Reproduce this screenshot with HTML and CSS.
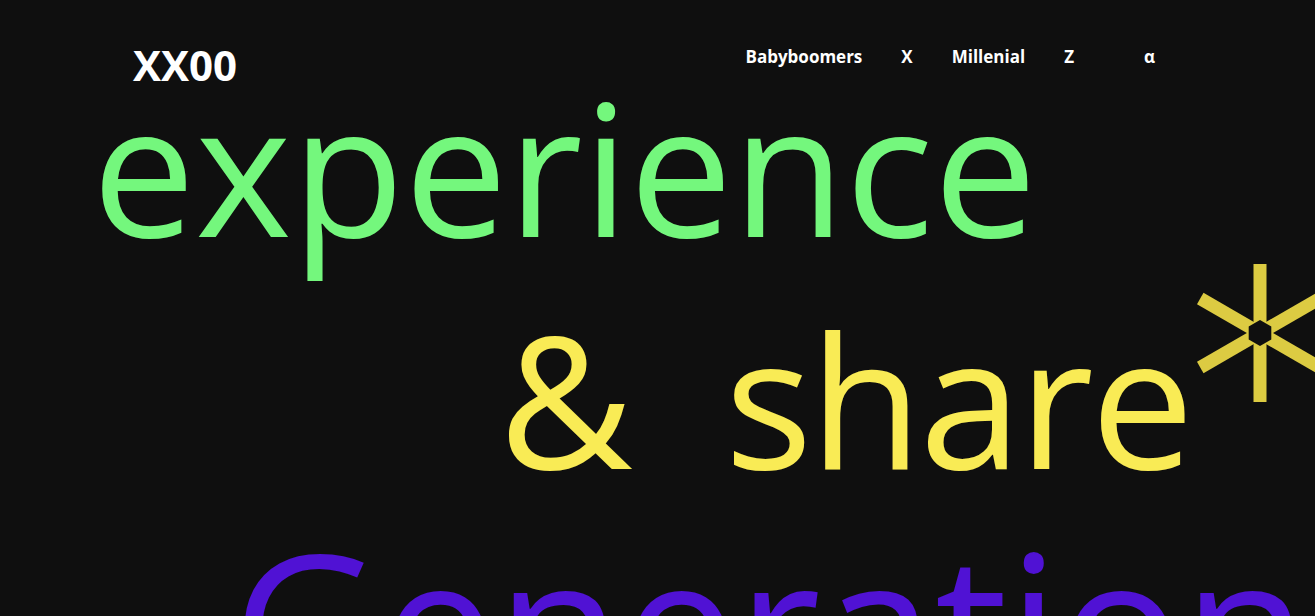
FILE: index.html
```html
<!DOCTYPE html>
<html lang="en">
<head>
<meta charset="utf-8">
<title>XX00</title>
<link rel="stylesheet" href="styles.css">
</head>
<body>
<div class="page">
  <header class="header">
    <div class="logo">XX00</div>
    <nav class="nav">
      <a class="nav-item">Babyboomers</a>
      <a class="nav-item">X</a>
      <a class="nav-item">Millenial</a>
      <a class="nav-item">Z</a>
      <a class="nav-item alpha">α</a>
    </nav>
  </header>
  <main class="hero">
    <div class="line line-green">experience</div>
    <div class="line line-yellow">&amp; share<svg class="star" viewBox="0 0 140 140" width="140" height="140"><g fill="#dccb42"><rect x="63.5" y="1" width="13" height="138"/><rect x="63.5" y="1" width="13" height="138" transform="rotate(60 70 70)"/><rect x="63.5" y="1" width="13" height="138" transform="rotate(-60 70 70)"/></g><polygon points="70,57 81.3,63.5 81.3,76.5 70,83 58.7,76.5 58.7,63.5" fill="#0f0f0f"/></svg></div>
    <div class="line line-purple">Generation</div>
  </main>
</div>
</body>
</html>
```

FILE: styles.css
```css
html, body {
  margin: 0;
  padding: 0;
  background: #0f0f0f;
  overflow: hidden;
}
.page {
  width: 1315px;
  height: 616px;
  overflow: hidden;
  font-family: "Open Sans", "Noto Sans", sans-serif;
  color: #ffffff;
}
.header {
  display: flex;
  align-items: flex-start;
  justify-content: space-between;
  padding: 41px 0 0 133px;
  height: 47px;
}
.logo {
  font-weight: 700;
  font-size: 42px;
  line-height: 48px;
}
.nav {
  display: flex;
  gap: 39px;
  padding: 5px 160px 0 0;
}
.nav-item {
  font-weight: 700;
  font-size: 17px;
  line-height: 22px;
  color: #ffffff;
}
.nav-item.alpha {
  margin-left: 31px;
}
.hero {
  display: flex;
  flex-direction: column;
  white-space: nowrap;
}
.line {
  font-size: 184px;
  line-height: 1;
}
.line-green {
  color: #74f77d;
  padding-left: 92px;
  margin-top: -14px;
}
.line-yellow {
  color: #f9eb55;
  padding-left: 499px;
  margin-top: 48px;
  word-spacing: 50px;
  letter-spacing: -3px;
  position: relative;
}
.star {
  position: absolute;
  top: -43px;
  margin-left: -1px;
}
.line-purple {
  color: #5012d4;
  font-size: 205px;
  padding-left: 232px;
  margin-top: 31px;
}
```
